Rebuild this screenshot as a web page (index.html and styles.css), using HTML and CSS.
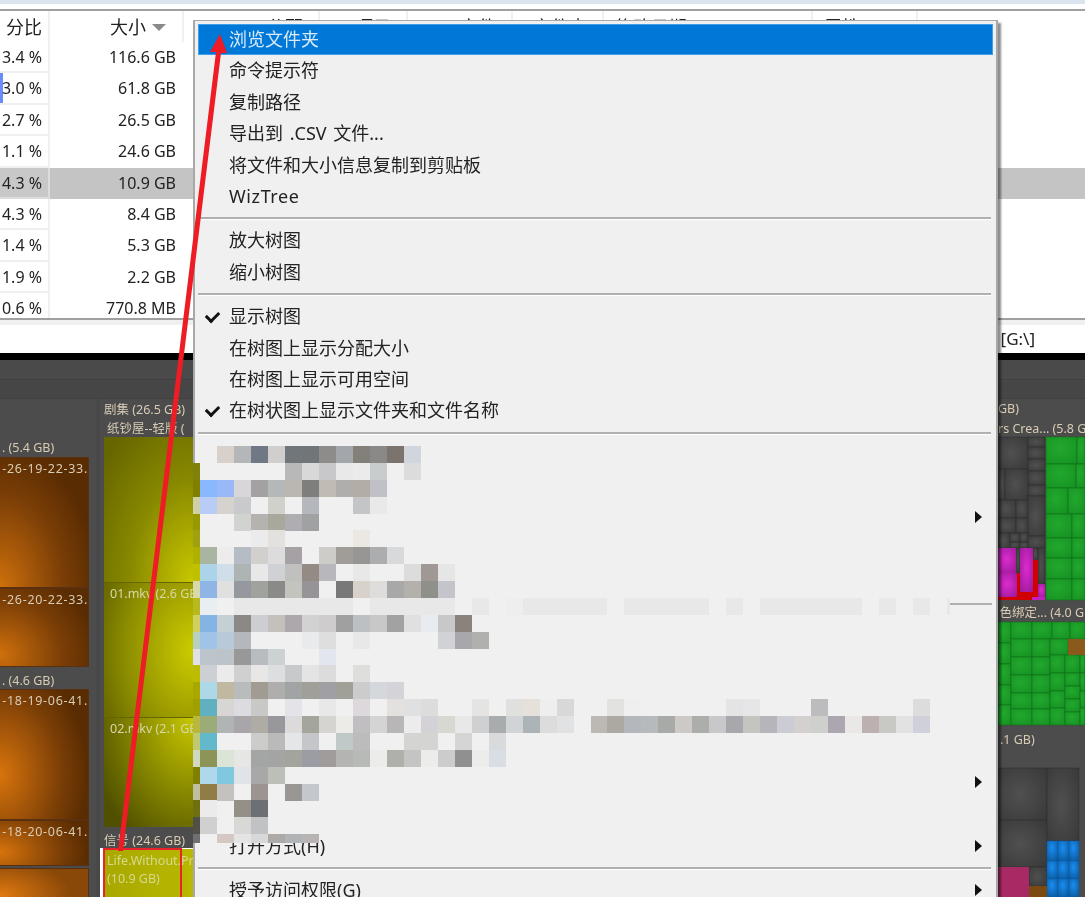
FILE: index.html
```html
<!DOCTYPE html>
<html lang="zh-CN">
<head>
<meta charset="utf-8">
<title>WizTree</title>
<link rel="stylesheet" href="styles.css">
</head>
<body>
<div class="app">
  <div class="topstrip"></div>
  <section class="table">
    <div class="row head">
      <div class="pct">分比</div>
      <div class="size">大小<span class="sort"></span></div>
      <div class="hcol c1">分配</div>
      <div class="hcol c2">项目</div>
      <div class="hcol c3">文件</div>
      <div class="hcol c4">文件夹</div>
      <div class="hcol c5">修改日期</div>
      <div class="hcol c6">属性</div>
    </div>
    <div class="row"><div class="pct">3.4 %</div><div class="size">116.6 GB</div></div>
    <div class="row"><div class="pct bar-a">3.0 %</div><div class="size">61.8 GB</div></div>
    <div class="row"><div class="pct">2.7 %</div><div class="size">26.5 GB</div></div>
    <div class="row"><div class="pct">1.1 %</div><div class="size">24.6 GB</div></div>
    <div class="row selected"><div class="pct bar-b">4.3 %</div><div class="size">10.9 GB</div></div>
    <div class="row"><div class="pct">4.3 %</div><div class="size">8.4 GB</div></div>
    <div class="row"><div class="pct">1.4 %</div><div class="size">5.3 GB</div></div>
    <div class="row"><div class="pct">1.9 %</div><div class="size">2.2 GB</div></div>
    <div class="row"><div class="pct">0.6 %</div><div class="size">770.8 MB</div></div>
  </section>
  <div class="pathbar"><span class="path">[G:\]</span></div>
  <section class="treemap">
    <div class="band b1"></div>
    <div class="band b2"></div>
    <div class="panel p-left"></div>
    <div class="panel p-mid"></div>
    <div class="panel p-right"></div>

    <span class="lbl l1">. (5.4 GB)</span>
    <div class="tile or t1"><span>-26-19-22-33.</span></div>
    <div class="tile or t2"><span>-26-20-22-33.</span></div>
    <span class="lbl l2">. (4.6 GB)</span>
    <div class="tile or t3"><span>-18-19-06-41.</span></div>
    <div class="tile or t4"><span>-18-20-06-41.</span></div>
    <div class="tile or t5"></div>

    <span class="lbl l3">剧集 (26.5 GB)</span>
    <span class="lbl l4">纸钞屋--轻版 (</span>
    <div class="tile ye y1"></div>
    <div class="tile ye y2"><span>01.mkv (2.6 GB</span></div>
    <div class="tile ye y3"><span>02.mkv (2.1 GB</span></div>
    <span class="lbl l5">信号 (24.6 GB)</span>
    <div class="tile sel"><span>Life.Without.Pr<br>(10.9 GB)</span></div>
    <div class="redframe"></div>

    <svg class="rightmap" viewBox="998 360 87 537" aria-hidden="true">
      <defs>
        <radialGradient id="gy" cx=".45" cy=".5" r="1"><stop offset="0" stop-color="#505050"/><stop offset="1" stop-color="#303030"/></radialGradient>
        <radialGradient id="gg" cx=".45" cy=".4" r="1"><stop offset="0" stop-color="#22a82e"/><stop offset="1" stop-color="#128a1e"/></radialGradient>
        <radialGradient id="gm" cx=".5" cy=".45" r=".9"><stop offset="0" stop-color="#dc2cd0"/><stop offset="1" stop-color="#8a1488"/></radialGradient>
        <radialGradient id="gb" cx=".45" cy=".35" r=".9"><stop offset="0" stop-color="#1a8cf0"/><stop offset="1" stop-color="#06508e"/></radialGradient>
      </defs>
      <g fill="url(#gy)" stroke="#2c2c2c" stroke-width=".5">
        <rect x="998" y="437" width="30" height="32"/><rect x="1028" y="437" width="17" height="10"/><rect x="1028" y="447" width="17" height="12"/><rect x="1028" y="459" width="17" height="12"/><rect x="1028" y="471" width="17" height="14"/><rect x="1028" y="485" width="17" height="11"/>
        <rect x="998" y="469" width="7" height="31"/><rect x="1005" y="469" width="23" height="31"/><rect x="998" y="500" width="18" height="18"/><rect x="1016" y="500" width="12" height="18"/><rect x="998" y="518" width="18" height="15"/><rect x="1016" y="518" width="12" height="15"/><rect x="1028" y="496" width="17" height="40"/>
        <rect x="998" y="533" width="12" height="15"/><rect x="1010" y="533" width="10" height="9"/><rect x="1020" y="533" width="8" height="9"/><rect x="1010" y="542" width="10" height="6"/><rect x="1020" y="542" width="8" height="6"/><rect x="1028" y="536" width="17" height="12"/>
        <rect x="1016" y="548" width="4" height="25"/><rect x="1033" y="548" width="5" height="12"/><rect x="1038" y="548" width="7" height="36"/>
        <rect x="998" y="768" width="49" height="52"/><rect x="998" y="820" width="49" height="47"/><rect x="1047" y="768" width="32" height="73"/><rect x="1029" y="867" width="18" height="19"/>
      </g>
      <g fill="url(#gm)">
        <rect x="998" y="548" width="18" height="25"/><rect x="998" y="573" width="19" height="24"/><rect x="1020" y="548" width="13" height="44"/><rect x="1038" y="584" width="7" height="13"/>
      </g>
      <path d="M1017 573h3v24h-3zM1020 592h13v5h-13zM1033 560h5v37h-5zM998 597h34v3h-34z" fill="#d00000"/>
      <path d="M1032 597h13v3h-13z" fill="#c020c0"/>
      <g fill="url(#gg)" stroke="#0e6a16" stroke-width=".5">
        <rect x="1046" y="437" width="31" height="27"/><rect x="1077" y="437" width="8" height="27"/><rect x="1046" y="464" width="30" height="24"/><rect x="1076" y="464" width="9" height="24"/><rect x="1046" y="488" width="22" height="26"/><rect x="1068" y="488" width="17" height="26"/>
        <rect x="1046" y="514" width="26" height="24"/><rect x="1072" y="514" width="13" height="24"/><rect x="1046" y="538" width="26" height="20"/><rect x="1072" y="538" width="13" height="20"/><rect x="1046" y="558" width="26" height="21"/><rect x="1072" y="558" width="13" height="21"/><rect x="1046" y="579" width="26" height="21"/><rect x="1072" y="579" width="13" height="21"/>
        <rect x="998" y="622" width="13" height="21"/><rect x="998" y="643" width="13" height="21"/><rect x="998" y="664" width="13" height="21"/><rect x="998" y="685" width="13" height="20"/><rect x="998" y="705" width="13" height="20"/>
        <rect x="1011" y="622" width="21" height="17"/><rect x="1032" y="622" width="20" height="17"/><rect x="1011" y="639" width="21" height="18"/><rect x="1032" y="639" width="18" height="18"/><rect x="1011" y="657" width="21" height="18"/><rect x="1032" y="657" width="18" height="18"/><rect x="1011" y="675" width="21" height="18"/><rect x="1032" y="675" width="18" height="18"/><rect x="1011" y="693" width="21" height="16"/><rect x="1032" y="693" width="18" height="16"/><rect x="1011" y="709" width="21" height="16"/><rect x="1032" y="709" width="18" height="16"/>
        <rect x="1052" y="622" width="18" height="17"/><rect x="1070" y="622" width="15" height="17"/><rect x="1050" y="639" width="18" height="16"/><rect x="1050" y="655" width="15" height="18"/><rect x="1065" y="655" width="15" height="18"/><rect x="1080" y="655" width="5" height="18"/><rect x="1050" y="673" width="15" height="18"/><rect x="1065" y="673" width="15" height="13"/><rect x="1080" y="673" width="5" height="18"/><rect x="1050" y="691" width="15" height="17"/><rect x="1065" y="686" width="15" height="13"/><rect x="1080" y="691" width="5" height="17"/><rect x="1050" y="708" width="15" height="17"/><rect x="1065" y="699" width="15" height="13"/><rect x="1065" y="712" width="15" height="13"/><rect x="1080" y="708" width="5" height="17"/>
      </g>
      <rect x="1068" y="639" width="17" height="16" fill="#8a5a1c"/>
      <g fill="url(#gb)" stroke="#0a5aa8" stroke-width=".4">
        <rect x="1047" y="841" width="11" height="20"/><rect x="1058" y="841" width="11" height="20"/><rect x="1069" y="841" width="10" height="20"/><rect x="1047" y="861" width="11" height="18"/><rect x="1058" y="861" width="11" height="18"/><rect x="1069" y="861" width="10" height="18"/><rect x="1047" y="879" width="11" height="18"/><rect x="1058" y="879" width="11" height="18"/><rect x="1069" y="879" width="10" height="18"/>
      </g>
      <rect x="998" y="867" width="31" height="30" fill="#a82a64"/>
      <rect x="1029" y="886" width="18" height="11" fill="#7a4a10"/>
    </svg>
    <span class="lbl r1">GB)</span>
    <span class="lbl r2">rs Crea... (5.8 GB)</span>
    <span class="lbl r3">角色绑定... (4.0 GB)</span>
    <span class="lbl r4">.1 GB)</span>
  </section>

  <nav class="menu">
    <div class="item active">浏览文件夹</div>
    <div class="item">命令提示符</div>
    <div class="item">复制路径</div>
    <div class="item">导出到 .CSV 文件...</div>
    <div class="item">将文件和大小信息复制到剪贴板</div>
    <div class="item latin">WizTree</div>
    <div class="sep"></div>
    <div class="item">放大树图</div>
    <div class="item">缩小树图</div>
    <div class="sep"></div>
    <div class="item checked">显示树图</div>
    <div class="item">在树图上显示分配大小</div>
    <div class="item">在树图上显示可用空间</div>
    <div class="item checked">在树状图上显示文件夹和文件名称</div>
    <div class="sep"></div>
    <div class="mosaic">
      <svg viewBox="193 440 805 403" aria-hidden="true">
        <rect x="217" y="446" fill="#d8d0cb"/><rect x="234" y="446" fill="#b4b6b8"/><rect x="251" y="446" fill="#717885"/><rect x="268" y="446" fill="#d0cfcd"/><rect x="285" y="446" fill="#70767a"/><rect x="302" y="446" fill="#6f7578"/><rect x="319" y="446" fill="#8e8c8a"/><rect x="336" y="446" fill="#a3a6aa"/><rect x="353" y="446" fill="#83807a"/><rect x="370" y="446" fill="#8a8987"/><rect x="387" y="446" fill="#7a736e"/><rect x="404" y="446" fill="#d0d5de"/>
        <rect class="e" x="193" y="463" fill="#80800a"/><rect x="285" y="463" fill="#b8b8b8"/><rect x="302" y="463" fill="#d8d8d8"/><rect x="319" y="463" fill="#c8c8ca"/><rect x="336" y="463" fill="#e9e9e9"/><rect x="353" y="463" fill="#ebebeb"/><rect x="370" y="463" fill="#c8cccc"/><rect x="404" y="463" fill="#dcdcdc"/>
        <rect class="e" x="193" y="480" fill="#808000"/><rect x="200" y="480" fill="#8ab8ff"/><rect x="217" y="480" fill="#98b8f8"/><rect x="234" y="480" fill="#d8d6d8"/><rect x="251" y="480" fill="#a2a2a2"/><rect x="268" y="480" fill="#b5b8b8"/><rect x="285" y="480" fill="#bab6b0"/><rect x="302" y="480" fill="#7e7e7c"/><rect x="319" y="480" fill="#c0bcb4"/><rect x="336" y="480" fill="#b0adad"/><rect x="353" y="480" fill="#b2aea6"/><rect x="370" y="480" fill="#c0c1c6"/>
        <rect class="e" x="193" y="497" fill="#d0d0a8"/><rect x="200" y="497" fill="#b8ccf5"/><rect x="217" y="497" fill="#d6d2ce"/><rect x="234" y="497" fill="#c8cacc"/><rect x="268" y="497" fill="#d0d1cb"/><rect x="302" y="497" fill="#b4b7bb"/><rect x="353" y="497" fill="#c4c5c7"/><rect x="370" y="497" fill="#e9e9e9"/>
        <rect class="e" x="193" y="514" fill="#989800"/><rect x="234" y="514" fill="#d0d3d0"/><rect x="251" y="514" fill="#b5b3b0"/><rect x="268" y="514" fill="#a8a99c"/><rect x="285" y="514" fill="#afadb2"/><rect x="302" y="514" fill="#a0a1a3"/>
        <rect class="e" x="193" y="530" fill="#a0a010"/><rect x="251" y="530" fill="#ebebeb"/><rect x="268" y="530" fill="#e4e0de"/><rect x="353" y="530" fill="#ebe7e3"/>
        <rect class="e" x="193" y="547" fill="#b0b000"/><rect x="200" y="547" fill="#a9b5a0"/><rect x="217" y="547" fill="#ececec"/><rect x="234" y="547" fill="#b6bcc4"/><rect x="251" y="547" fill="#d2d0cc"/><rect x="268" y="547" fill="#dcdcdc"/><rect x="285" y="547" fill="#a5a1a4"/><rect x="319" y="547" fill="#cdccc8"/><rect x="336" y="547" fill="#a09c98"/><rect x="353" y="547" fill="#989694"/><rect x="370" y="547" fill="#acadae"/><rect x="387" y="547" fill="#d8d9db"/>
        <rect class="e" x="193" y="564" fill="#c0c000"/><rect x="200" y="564" fill="#acd4e8"/><rect x="217" y="564" fill="#d0deea"/><rect x="234" y="564" fill="#aeb4b4"/><rect x="251" y="564" fill="#e8e8e8"/><rect x="268" y="564" fill="#d0d1d4"/><rect x="285" y="564" fill="#c0c0be"/><rect x="302" y="564" fill="#948c84"/><rect x="319" y="564" fill="#b8b8bc"/><rect x="353" y="564" fill="#e8e8e8"/><rect x="404" y="564" fill="#dcdcdc"/><rect x="421" y="564" fill="#a09894"/><rect x="438" y="564" fill="#e6e6e6"/>
        <rect class="e" x="193" y="581" fill="#d8d8a8"/><rect x="200" y="581" fill="#90b4e4"/><rect x="217" y="581" fill="#e0e0e0"/><rect x="234" y="581" fill="#9698a0"/><rect x="251" y="581" fill="#a0a29e"/><rect x="268" y="581" fill="#8a8a88"/><rect x="285" y="581" fill="#c4c4be"/><rect x="302" y="581" fill="#969496"/><rect x="336" y="581" fill="#787878"/><rect x="353" y="581" fill="#d8d2ca"/><rect x="370" y="581" fill="#dedddb"/><rect x="387" y="581" fill="#a8a8a8"/><rect x="404" y="581" fill="#b4b0ac"/><rect x="421" y="581" fill="#90908a"/><rect x="438" y="581" fill="#c4c5ca"/>
        <rect class="e" x="193" y="598" fill="#b8b820"/><rect x="200" y="598" fill="#e8eef2"/><path d="M234 598h119v17h-119zM370 598h85v17h-85zM472 598h17v17h-17zM523 598h84v17h-84zM624 598h85v17h-85zM726 598h17v17h-17zM760 598h102v17h-102zM879 598h17v17h-17zM913 598h17v17h-17zM947 598h3v17h-3z" fill="#e8e8e8"/><path d="M506 598h17v17h-17z" fill="#eeeeee"/>
        <path d="M950 603h42v2h-42z" fill="#b0b0b0"/>
        <rect class="e" x="193" y="615" fill="#d0d060"/><rect x="200" y="615" fill="#84b4e4"/><rect x="217" y="615" fill="#c4d0d4"/><rect x="234" y="615" fill="#8c8886"/><rect x="251" y="615" fill="#ccced2"/><rect x="268" y="615" fill="#c4c0bc"/><rect x="285" y="615" fill="#aca8ac"/><rect x="302" y="615" fill="#d2d2d2"/><rect x="319" y="615" fill="#cecccc"/><rect x="336" y="615" fill="#a0a0a0"/><rect x="353" y="615" fill="#bcc0c4"/><rect x="370" y="615" fill="#c8c8c8"/><rect x="387" y="615" fill="#a2a2a2"/><rect x="404" y="615" fill="#e0e0e0"/><rect x="421" y="615" fill="#e8ecf0"/><rect x="438" y="615" fill="#c8c8c8"/><rect x="455" y="615" fill="#8a827c"/>
        <rect class="e" x="193" y="632" fill="#b8d0c0"/><rect x="200" y="632" fill="#a0c4e8"/><rect x="217" y="632" fill="#b8cad8"/><rect x="234" y="632" fill="#b4b8bc"/><rect x="302" y="632" fill="#e8eaec"/><rect x="319" y="632" fill="#dedede"/><rect x="353" y="632" fill="#e8e8e8"/><rect x="438" y="632" fill="#d0d2d6"/><rect x="455" y="632" fill="#a8a8ac"/><rect x="472" y="632" fill="#b0b0ae"/>
        <rect class="e" x="193" y="649" fill="#e0e0e8"/><rect x="200" y="649" fill="#bcc4cc"/><rect x="217" y="649" fill="#bcc4ca"/><rect x="234" y="649" fill="#989898"/><rect x="251" y="649" fill="#b8bcc0"/><rect x="268" y="649" fill="#ccd2d4"/><rect x="319" y="649" fill="#e2e6ee"/>
        <rect class="e" x="193" y="665" fill="#bcbc00"/><rect x="200" y="665" fill="#ccd0d4"/><rect x="217" y="665" fill="#ecebec"/><rect x="234" y="665" fill="#d0d0d0"/><rect x="251" y="665" fill="#e8e7e5"/><rect x="268" y="665" fill="#dcdee0"/><rect x="285" y="665" fill="#c8c9ca"/><rect x="302" y="665" fill="#e4e4e4"/><rect x="319" y="665" fill="#dcdcdc"/><rect x="353" y="665" fill="#dededc"/>
        <rect class="e" x="193" y="682" fill="#a8a800"/><rect x="200" y="682" fill="#acd8e8"/><rect x="217" y="682" fill="#c0b8a0"/><rect x="234" y="682" fill="#b8bcbc"/><rect x="251" y="682" fill="#a09c94"/><rect x="268" y="682" fill="#b0aeac"/><rect x="285" y="682" fill="#a0a4a4"/><rect x="302" y="682" fill="#a0a098"/><rect x="319" y="682" fill="#a0a0a4"/><rect x="336" y="682" fill="#a0a098"/><rect x="353" y="682" fill="#cccccc"/><rect x="370" y="682" fill="#d4d8dc"/><rect x="387" y="682" fill="#d4d4d8"/>
        <rect class="e" x="193" y="699" fill="#a0a000"/><rect x="200" y="699" fill="#60b0c0"/><rect x="217" y="699" fill="#d8d6d4"/><rect x="234" y="699" fill="#dcdce0"/><rect x="251" y="699" fill="#c8c8c6"/><rect x="285" y="699" fill="#e4e4e8"/><rect x="319" y="699" fill="#e8e8e8"/><rect x="353" y="699" fill="#dcd8dc"/><rect x="387" y="699" fill="#e4e0de"/><rect x="404" y="699" fill="#e0e0e0"/><rect x="421" y="699" fill="#dcdcdc"/><rect x="472" y="699" fill="#e6e4e2"/><rect x="506" y="699" fill="#e0e0de"/><rect x="523" y="699" fill="#e6e0da"/><rect x="540" y="699" fill="#eeeeee"/><rect x="557" y="699" fill="#d8d8d8"/><rect x="607" y="699" fill="#e2e2e0"/><rect x="624" y="699" fill="#efefef"/><rect x="726" y="699" fill="#e4e4e4"/><rect x="743" y="699" fill="#e6e6e8"/><rect x="811" y="699" fill="#bcbcbe"/><rect x="913" y="699" fill="#dcdcdc"/>
        <rect class="e" x="193" y="716" fill="#b8b840"/><rect x="200" y="716" fill="#9cac78"/><rect x="217" y="716" fill="#b0b4b4"/><rect x="234" y="716" fill="#a8a6a8"/><rect x="251" y="716" fill="#aeaca4"/><rect x="268" y="716" fill="#98989c"/><rect x="285" y="716" fill="#dcdada"/><rect x="302" y="716" fill="#a4a69c"/><rect x="319" y="716" fill="#d6d4d0"/><rect x="336" y="716" fill="#ecebe8"/><rect x="353" y="716" fill="#c0bec0"/><rect x="370" y="716" fill="#d4d4d4"/><rect x="387" y="716" fill="#b8b6b6"/><rect x="404" y="716" fill="#ececec"/><rect x="421" y="716" fill="#d4d2d6"/><rect x="438" y="716" fill="#d8d8d2"/><rect x="455" y="716" fill="#e8e8e8"/><rect x="472" y="716" fill="#ced0d2"/><rect x="489" y="716" fill="#a8acac"/><rect x="506" y="716" fill="#d0d4d6"/><rect x="523" y="716" fill="#acb4b8"/><rect x="540" y="716" fill="#dcdcdc"/><rect x="557" y="716" fill="#e0e2e4"/><rect x="591" y="716" fill="#bcb8b4"/><rect x="607" y="716" fill="#aca8a2"/><rect x="624" y="716" fill="#b4b8bc"/><rect x="641" y="716" fill="#b6babc"/><rect x="658" y="716" fill="#a8aaa8"/><rect x="675" y="716" fill="#ccc9c6"/><rect x="692" y="716" fill="#acaeac"/><rect x="709" y="716" fill="#c8c8ca"/><rect x="726" y="716" fill="#a8a8ac"/><rect x="743" y="716" fill="#c4c4c0"/><rect x="760" y="716" fill="#b6b6ba"/><rect x="777" y="716" fill="#cccdd4"/><rect x="794" y="716" fill="#d4d0cf"/><rect x="811" y="716" fill="#ced0ce"/><rect x="828" y="716" fill="#aca6b0"/><rect x="845" y="716" fill="#eae8e6"/><rect x="862" y="716" fill="#bcb0b0"/><rect x="879" y="716" fill="#c8c8c4"/><rect x="896" y="716" fill="#e2e2e2"/><rect x="913" y="716" fill="#d0d0da"/>
        <rect class="e" x="193" y="733" fill="#c0c870"/><rect x="200" y="733" fill="#64b8cc"/><rect x="251" y="733" fill="#ccccca"/><rect x="268" y="733" fill="#bababa"/><rect x="285" y="733" fill="#e4e6e8"/><rect x="302" y="733" fill="#c4c6ca"/><rect x="336" y="733" fill="#c0c8c8"/><rect x="353" y="733" fill="#bcbcbc"/><rect x="404" y="733" fill="#d4d4d2"/><rect x="421" y="733" fill="#d4d4d2"/><rect x="455" y="733" fill="#d4d6d4"/><rect x="489" y="733" fill="#d8dadc"/>
        <rect class="e" x="193" y="750" fill="#d0d8c0"/><rect x="200" y="750" fill="#8c9458"/><rect x="217" y="750" fill="#dce4d8"/><rect x="234" y="750" fill="#e6e6e4"/><rect x="251" y="750" fill="#a4a6a6"/><rect x="268" y="750" fill="#a4a4a4"/><rect x="285" y="750" fill="#a4a49e"/><rect x="302" y="750" fill="#9c9ca4"/><rect x="319" y="750" fill="#a09c9c"/><rect x="336" y="750" fill="#b4b4b2"/><rect x="353" y="750" fill="#b8bab8"/><rect x="370" y="750" fill="#ececea"/><rect x="387" y="750" fill="#b0b0aa"/><rect x="404" y="750" fill="#c4c4c2"/><rect x="421" y="750" fill="#ececea"/><rect x="438" y="750" fill="#cccccc"/><rect x="455" y="750" fill="#909090"/><rect x="472" y="750" fill="#ececea"/><rect x="489" y="750" fill="#d8dee4"/>
        <rect class="e" x="193" y="767" fill="#808000"/><rect x="200" y="767" fill="#b0d8ec"/><rect x="217" y="767" fill="#80c8e0"/><rect x="234" y="767" fill="#e0e4e8"/><rect x="251" y="767" fill="#a8a8a8"/><rect x="268" y="767" fill="#bcbeb8"/>
        <rect class="e" x="193" y="784" fill="#c0c0a0"/><rect x="200" y="784" fill="#907c44"/><rect x="217" y="784" fill="#c4c2be"/><rect x="251" y="784" fill="#9c9490"/><rect x="285" y="784" fill="#9a9694"/><rect x="302" y="784" fill="#c4c8cc"/>
        <rect class="e" x="193" y="800" fill="#707010"/><rect x="200" y="800" fill="#ebebeb"/><rect x="234" y="800" fill="#949088"/><rect x="251" y="800" fill="#6c7074"/>
        <rect class="e" x="193" y="817" fill="#505048"/><rect x="200" y="817" fill="#d0d0d0"/><rect x="234" y="817" fill="#d8d8d6"/><rect x="251" y="817" fill="#c0c2c4"/>
        <rect class="e" x="193" y="834" fill="#707070"/><rect x="217" y="834" fill="#d4c8c4"/><rect x="234" y="834" fill="#e4e4e4"/><rect x="251" y="834" fill="#d8d8da"/><rect x="268" y="834" fill="#aca9a7"/><rect x="285" y="834" fill="#b0b4b6"/><rect x="302" y="834" fill="#b8b4b4"/>
      </svg>
      <span class="chev m1"></span>
      <span class="chev m2"></span>
    </div>
    <div class="item more">打开方式(H)<span class="chev"></span></div>
    <div class="sep"></div>
    <div class="item more">授予访问权限(G)<span class="chev"></span></div>
  </nav>

  <svg class="annot" viewBox="0 0 1085 897" aria-hidden="true">
    <path d="M118 851 L216 52 L210 52 L220 34 L227 53 L221 53 L123 851 Z" fill="#ee1c25"/>
  </svg>
</div>
</body>
</html>
```
FILE: styles.css
```css
* { box-sizing: border-box; }
html, body { margin: 0; padding: 0; height: 100%; overflow: hidden; background: #fff; }
body { font-family: "Noto Sans", "Noto Sans CJK SC", sans-serif; color: #222; }

.app {
  position: relative;
  width: 1085px;
  height: 897px;
  overflow: hidden;
  display: flex;
  flex-direction: column;
  filter: blur(0.45px);
}

.topstrip {
  flex: none;
  height: 11px;
  background: linear-gradient(#dbe5ef 0, #dbe5ef 4px, #fff 4px, #fff 9px, #a0a0a0 9px);
}

/* table */
.table {
  flex: none;
  height: 307px;
  overflow: hidden;
  font-size: 16px;
}
.row { display: flex; height: 31.4px; line-height: 31px; background: #fff; }
.row.selected { background: #c4c4c4; }
.pct {
  position: relative;
  flex: none;
  width: 50px;
  padding-right: 6px;
  text-align: right;
  white-space: nowrap;
  background: #fff;
  border-right: 2px solid #f0f0f0;
  border-bottom: 2px solid #f0f0f0;
}
.selected .pct { background: #c8c8c8; border-color: #dcdcdc; }
.bar-a { background: linear-gradient(90deg, #6a8cff 3px, #fff 3px); }
.bar-b { background: linear-gradient(90deg, #6a8cff 1px, #c8c8c8 1px); }
.size { flex: none; width: 134px; padding-right: 8px; text-align: right; white-space: nowrap; }

.head { height: 31px; font-size: 18px; line-height: 32px; }
.head .pct { border-bottom: 0; padding-right: 6px; }
.head .size { border-right: 2px solid #f0f0f0; padding-right: 36px; position: relative; }
.sort {
  position: absolute;
  right: 16px;
  top: 13px;
  border: 7px solid transparent;
  border-top: 7px solid #8a8a8a;
  border-bottom: 0;
}
.hcol { flex: none; border-right: 2px solid #f0f0f0; text-align: right; padding-right: 15px; white-space: nowrap; }
.c1 { width: 136px; }
.c2 { width: 88px; }
.c3 { width: 105px; }
.c4 { width: 91px; }
.c5 { width: 209px; text-align: left; padding-left: 11px; }
.c6 { width: 105px; text-align: left; padding-left: 11px; }

/* path bar */
.pathbar {
  flex: none;
  height: 35px;
  border-top: 2px solid #a0a0a0;
  background: linear-gradient(#f0f0f0 5px, #fff 5px);
  display: flex;
  justify-content: flex-end;
  font-size: 17px;
  line-height: 38px;
  padding-right: 50px;
}
.path { color: #222; }

/* treemap: free canvas of tiles */
.treemap {
  position: relative;
  flex: 1;
  background: #484848;
  border-top: 7px solid #000;
  color: #d8ccb4;
  font-size: 12.5px;
}
.band { position: absolute; left: 0; right: 0; }
.b1 { top: 0; height: 20px; background: #4a4a4a; border-bottom: 1px solid #404040; }
.b2 { top: 21px; height: 18px; background: #464646; border-bottom: 1px solid #404040; }
.panel { position: absolute; top: 39px; bottom: 0; background: #4c4c4c; }
.p-left { left: 0; width: 96px; }
.p-mid { left: 100px; width: 93px; }
.p-right { left: 998px; width: 87px; }

.lbl { position: absolute; white-space: nowrap; line-height: 16px; }
.l1 { left: 2px; top: 80px; }
.l2 { left: 2px; top: 313px; }
.l3 { left: 104px; top: 42px; }
.l4 { left: 107px; top: 61px; }
.l5 { left: 104px; top: 473px; }
.r1 { left: 998px; top: 41px; }
.r2 { left: 998px; top: 61px; }
.r3 { left: 987px; top: 245px; }
.r4 { left: 1000px; top: 372px; }

.tile { position: absolute; overflow: hidden; white-space: nowrap; }
.tile span { position: absolute; top: 3px; left: 6px; line-height: 16px; }
.or span { left: auto; right: 0; letter-spacing: .7px; }
.or { left: 0; width: 89px; border: 1px solid #5a3010; border-left: 0; }
.t1 { top: 97px; height: 131px; background: radial-gradient(ellipse 110% 110% at 0% 100%, #cf700c, #7a3e06 65%, #5a2c02); }
.t2 { top: 228px; height: 79px; background: radial-gradient(ellipse 110% 110% at 0% 85%, #cf700c, #7a3e06 65%, #5a2c02); }
.t3 { top: 329px; height: 131px; background: radial-gradient(ellipse 100% 90% at 0% 65%, #d8740c, #7a3e06 70%, #5a2c02); }
.t4 { top: 460px; height: 46px; background: radial-gradient(ellipse 100% 120% at 0% 70%, #d8740c, #7a3e06 70%, #5a2c02); }
.t5 { top: 508px; height: 40px; background: radial-gradient(ellipse 100% 120% at 0% 70%, #e07a10, #8a4808 80%); }

.ye { left: 104px; width: 89px; color: #d8d8a8; }
.y1 { top: 77px; height: 145px; background: radial-gradient(ellipse 130% 130% at 100% 100%, #c8c800, #888800 55%, #666600); }
.y2 { top: 222px; height: 135px; background: radial-gradient(ellipse 110% 100% at 100% 50%, #cccc00, #8c8c00 70%, #6a6a00); border-top: 1px solid #666600; }
.y3 { top: 357px; height: 110px; background: radial-gradient(ellipse 120% 130% at 100% 0%, #c8c800, #808000 60%, #505000); border-top: 1px solid #666600; }

.sel {
  left: 100px;
  top: 488px;
  width: 93px;
  height: 60px;
  background: linear-gradient(90deg, #a8a800, #b8b800);
  border-left: 3px solid #fff;
  border-top: 1px solid #fff;
  color: #d8d890;
}
.sel span { left: 4px; top: 3px; line-height: 18px; }
.redframe {
  position: absolute;
  left: 103px;
  top: 488px;
  width: 79px;
  height: 60px;
  border: 2px solid #e8232b;
}
.rightmap { position: absolute; left: 998px; top: 0; width: 87px; height: 537px; }

/* context menu */
.menu {
  position: absolute;
  left: 193px;
  top: 20px;
  width: 805px;
  height: 900px;
  padding: 3px 3px 0;
  background: #f0f0f0;
  border: 2px solid #a8a8a8;
  border-top-width: 1px;
  box-shadow: 3px 3px 2px rgba(0, 0, 0, .45);
  font-size: 18px;
  font-family: "Noto Sans", "Noto Sans CJK SC", sans-serif;
  color: #222;
  word-spacing: 2px;
}
.item {
  position: relative;
  height: 31.4px;
  line-height: 31px;
  padding-left: 31px;
  white-space: nowrap;
}
.item.latin { letter-spacing: .6px; }
.item.active {
  background: #0078d7;
  color: #d8eaf8;
  border: 1px solid #3f9fe8;
  padding-left: 30px;
  line-height: 29px;
}
.item.checked::before {
  content: "";
  position: absolute;
  left: 8px;
  top: 10px;
  width: 10px;
  height: 6px;
  border-left: 3px solid #111;
  border-bottom: 3px solid #111;
  transform: rotate(-45deg);
}
.sep { height: 13px; padding-top: 5px; }
.sep::before {
  content: "";
  display: block;
  height: 3px;
  background: linear-gradient(#b0b0b0 2px, #fff 2px);
  margin-right: 2px;
}
.mosaic { position: relative; height: 391px; z-index: 1; }
.mosaic svg {
  position: absolute;
  left: -5px;
  top: 0;
  width: 805px;
  height: 403px;
  shape-rendering: crispEdges;
}
.mosaic rect { width: 17px; height: 17px; }
.mosaic rect.e { width: 7px; }
.chev {
  position: absolute;
  right: 11px;
  top: 9px;
  border-left: 7px solid #111;
  border-top: 6px solid transparent;
  border-bottom: 6px solid transparent;
}
.mosaic .m1 { top: 71px; }
.mosaic .m2 { top: 336px; }

.annot { position: absolute; left: 0; top: 0; width: 1085px; height: 897px; pointer-events: none; }
```
